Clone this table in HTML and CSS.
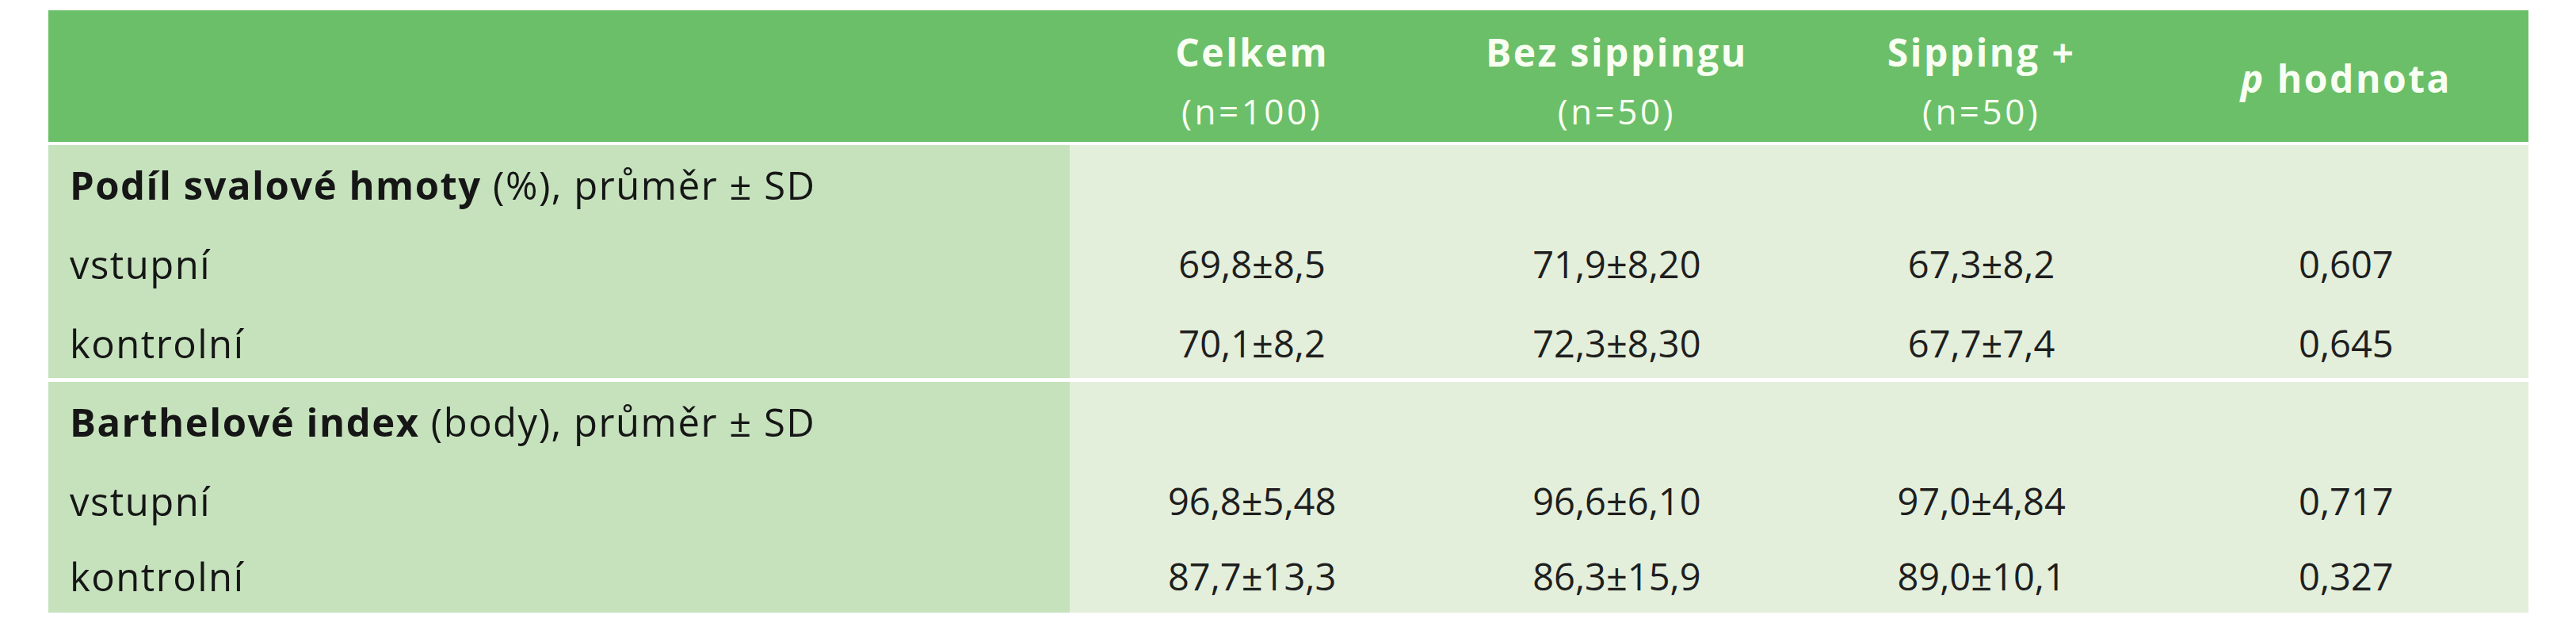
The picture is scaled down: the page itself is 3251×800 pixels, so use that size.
FILE: index.html
```html
<!DOCTYPE html>
<html lang="cs">
<head>
<meta charset="utf-8">
<title>Tabulka</title>
<link rel="stylesheet" href="styles.css">
</head>
<body>
<div class="table">
  <div class="thead">
    <div class="th th-empty"></div>
    <div class="th th-two"><span class="l1">Celkem</span><span class="l2">(n=100)</span></div>
    <div class="th th-two"><span class="l1">Bez sippingu</span><span class="l2">(n=50)</span></div>
    <div class="th th-two"><span class="l1">Sipping +</span><span class="l2">(n=50)</span></div>
    <div class="th th-one"><span class="l1"><i>p</i> hodnota</span></div>
  </div>

  <div class="group g1">
    <div class="lab"><b>Podíl svalové hmoty</b> (%), průměr ± SD</div>
    <div class="num"></div><div class="num"></div><div class="num"></div><div class="num"></div>

    <div class="lab">vstupní</div>
    <div class="num">69,8±8,5</div><div class="num">71,9±8,20</div><div class="num">67,3±8,2</div><div class="num">0,607</div>

    <div class="lab">kontrolní</div>
    <div class="num">70,1±8,2</div><div class="num">72,3±8,30</div><div class="num">67,7±7,4</div><div class="num">0,645</div>
  </div>

  <div class="group g2">
    <div class="lab"><b>Barthelové index</b> (body), průměr ± SD</div>
    <div class="num"></div><div class="num"></div><div class="num"></div><div class="num"></div>

    <div class="lab">vstupní</div>
    <div class="num">96,8±5,48</div><div class="num">96,6±6,10</div><div class="num">97,0±4,84</div><div class="num">0,717</div>

    <div class="lab">kontrolní</div>
    <div class="num">87,7±13,3</div><div class="num">86,3±15,9</div><div class="num">89,0±10,1</div><div class="num">0,327</div>
  </div>
</div>
</body>
</html>
```

FILE: styles.css
```css
html, body {
  margin: 0;
  padding: 0;
  background: #ffffff;
}

body {
  padding: 13px 0 0 61px;
  font-family: "Open Sans", "Noto Sans", sans-serif;
  color: #1c1c1c;
}

.table {
  width: 3130px;
  background: #ffffff;
}

.thead,
.group {
  display: grid;
  grid-template-columns: 1289px repeat(4, 1fr);
}

.thead {
  height: 166px;
  background: #6bbf69;
  color: #f8fff2;
}

.th {
  display: flex;
  flex-direction: column;
  align-items: center;
  text-align: center;
}

.th-two {
  padding-top: 18px;
}

.th-one {
  justify-content: center;
  padding-top: 6px;
}

.l1 {
  display: block;
  font-family: "Open Sans", "Noto Sans", sans-serif;
  font-weight: 700;
  font-size: 48px;
  line-height: 70px;
  letter-spacing: 2.5px;
  white-space: nowrap;
}

.l1 i {
  font-style: italic;
}

.l2 {
  display: block;
  font-family: "Open Sans", "Noto Sans", sans-serif;
  font-weight: 400;
  font-size: 44px;
  line-height: 78px;
  letter-spacing: 3.5px;
  white-space: nowrap;
}

.group {
  align-items: start;
}

.g1 {
  margin-top: 4px;
  grid-template-rows: 100px 100px 94px;
}

.g2 {
  margin-top: 5px;
  grid-template-rows: 100px 95px 96px;
}

.lab,
.num {
  height: 100%;
  line-height: 100px;
  white-space: nowrap;
}

.lab {
  background: #c5e2bc;
  padding-left: 27px;
  font-size: 49px;
  letter-spacing: 1.5px;
  color: #161616;
}

.lab b {
  font-weight: 700;
}

.num {
  background: #e3efdb;
  text-align: center;
  font-size: 47px;
  color: #1e1e1e;
}
```
